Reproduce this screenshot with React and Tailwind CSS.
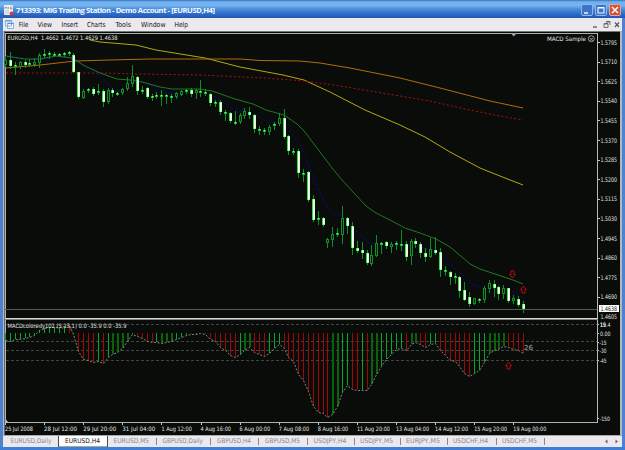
import React from "react";

// [high, bodyTop, bodyBottom, low, filled]
const CANDLES = [
  [56,60,65,66,0],[52,60,66,68,1],[62,65,67,74,0],[61,62,67,68,0],[60,62,65,67,1],[59,63,65,66,1],[58,62,65,66,0],[53,55,63,67,0],[49,54,55,57,1],[51,53,55,58,1],
  [52,54,55,56,1],[53,54,55,56,1],[52,53,55,56,1],[51,52,54,55,1],[53,55,72,72,1],[72,72,97,98,1],[89,91,98,98,0],[88,89,91,92,1],[87,89,94,95,1],[84,91,93,94,1],
  [89,91,102,106,1],[88,90,102,103,0],[88,90,93,96,1],[92,93,94,95,1],[88,89,93,94,0],[77,83,89,90,0],[65,76,84,86,0],[76,77,91,94,1],[86,90,92,93,1],[87,88,97,98,1],
  [94,96,97,100,1],[92,95,96,98,1],[90,95,96,105,1],[94,95,97,103,1],[94,96,97,102,1],[92,93,97,98,0],[90,91,95,95,0],[89,90,92,93,1],[88,90,94,96,1],[89,90,93,98,0],
  [80,91,92,96,1],[89,92,94,95,1],[93,94,103,105,1],[100,102,103,106,1],[100,102,112,114,1],[110,112,114,120,1],[112,113,121,122,1],[111,122,123,124,1],[113,115,122,123,0],[108,111,116,118,0],
  [107,112,115,118,1],[114,115,129,132,1],[126,129,130,134,1],[128,130,131,134,1],[125,127,132,134,0],[122,124,126,129,0],[113,118,124,125,0],[109,118,137,138,1],[135,136,151,154,1],[148,151,152,154,1],
  [149,151,173,177,1],[169,173,174,181,1],[171,172,200,201,1],[195,199,220,221,1],[211,218,219,224,1],[217,218,225,226,1],[238,239,243,247,0],[227,234,240,246,0],[228,233,235,236,1],[206,218,235,243,0],
  [217,218,226,233,1],[222,226,248,254,1],[241,248,251,252,1],[242,250,253,258,1],[250,253,263,264,1],[245,255,264,265,0],[235,243,256,256,0],[242,243,245,253,0],[241,242,246,248,1],[242,244,247,252,0],
  [241,243,244,249,1],[230,244,245,250,1],[241,244,257,260,1],[239,241,256,264,0],[238,241,244,247,1],[242,244,253,257,1],[248,253,257,261,1],[238,249,257,257,0],[237,250,253,254,1],[248,252,270,276,1],
  [266,270,272,275,1],[271,272,277,284,1],[273,276,278,283,1],[276,277,291,297,1],[282,290,300,300,1],[292,297,304,306,1],[298,298,304,304,0],[298,299,301,302,0],[286,288,300,302,0],[280,283,289,292,0],
  [280,284,288,296,1],[286,287,294,299,1],[285,288,294,298,0],[288,288,301,302,1],[295,298,301,303,0],[296,299,305,306,1],[301,304,309,312,1],
];

// MACD values as y positions; colours: g bright green, d dark green, r red
const MACD = [340,341,339,339,338,337,335,330,328,327,327,327,326,325,334,351,359,360,362,361,363,357,354,352,348,341,334,336,338,341,342,342,343,342,341,339,337,335,334,334,333,334,339,341,347,350,355,357,354,350,347,352,354,356,353,348,344,348,357,361,374,380,391,406,412,413,417,414,406,392,385,389,390,390,390,384,374,366,359,354,349,348,350,344,342,344,347,344,343,350,355,360,361,366,373,376,373,370,362,353,350,349,346,347,349,350,353];
const COLORS = "gggggggggggggrrrrrrgrgddddgrrrrgdddgggrgrrrrrrrrgddrrrgggrrrrrrrrrrddggrrgrddgggggrddrrggrrrrrrrgggddddrrrr";
const FILL = { g: "#00a832", d: "#0b620b", r: "#a30606" };
const cx = (i) => 5 + Math.round(i * 4.886);

const PRICES = ["1.5795","1.5710","1.5625","1.5540","1.5455","1.5370","1.5285","1.5200","1.5115","1.5030","1.4945","1.4860","1.4775","1.4690"];
const DATES = ["25 Jul 2008","28 Jul 12:00","29 Jul 20:00","31 Jul 04:00","1 Aug 12:00","4 Aug 16:00","6 Aug 00:00","7 Aug 08:00","8 Aug 16:00","11 Aug 20:00","13 Aug 04:00","14 Aug 12:00","15 Aug 20:00","19 Aug 00:00"];
const LEVELS = [["15",326.5],["19.4",326.5],["0.00",335.5],["-15",344.5],["-30",353],["-45",362.5],["-150",421]];
const TABS = ["EURUSD,Daily","EURUSD,H4","EURUSD,M5","GBPUSD,Daily","GBPUSD,H4","GBPUSD,M5","USDJPY,H4","USDJPY,M5","EURJPY,M5","USDCHF,H4","USDCHF,M5"];
const MENU = ["File","View","Insert","Charts","Tools","Window","Help"];
const FONT = "[font-family:'DejaVu_Sans',sans-serif]";

function T({ x, y, w, children, size = 6, fill = "#e2e5e2" }) {
  return (
    <text x={x} y={y} fontSize={size} fill={fill} textLength={w} lengthAdjust="spacingAndGlyphs">{children}</text>
  );
}

function Arrow({ x, y, down }) {
  return (
    <path
      transform={`translate(${x} ${y}) scale(1 ${down ? -1 : 1})`}
      d="M0 -3.5 L3 0 H1.5 V3.5 H-1.5 V0 H-3 Z"
      fill="none" stroke="#b90808" strokeWidth="1"
    />
  );
}

function Chart() {
  return (
    <svg viewBox="4 31 616 404" className={`block h-[404px] w-[616px] shrink-0 overflow-visible ${FONT}`}>
      <rect x="4" y="31" width="616" height="404" fill="#0a0c09" />
      <g shapeRendering="crispEdges">
        <rect x="4" y="31" width="616" height="1" fill="#77777a" />
        <rect x="4" y="31" width="1" height="404" fill="#65686a" />
        <rect x="5" y="33" width="593" height="1" fill="#aab0aa" />
        <rect x="5" y="33" width="1" height="390" fill="#aab0aa" />
        <rect x="597" y="33" width="1" height="390" fill="#b5bab5" />
        <rect x="5" y="309" width="592" height="1" fill="#555a55" />
        <rect x="5" y="318" width="593" height="1" fill="#d4d6d4" />
        <rect x="5" y="319" width="593" height="1" fill="#80827f" />
        <rect x="5" y="422" width="593" height="1" fill="#b0b4b0" />
        {[324, 341, 350, 360].map((y) => (
          <path key={y} d={`M6 ${y}.5 H597`} stroke="#414541" strokeDasharray="3 2" />
        ))}
        {MACD.map((y, i) => (
          <rect key={i} x={cx(i)} y={Math.min(y, 333)} width={COLORS[i] === "d" ? 2 : 1} height={Math.abs(y - 333)} fill={FILL[COLORS[i]]} />
        ))}
        {PRICES.map((p, i) => <rect key={p} x="598" y={42 + Math.round(i * 19.6)} width="2" height="1" fill="#c5c8c5" />)}
        {DATES.map((p, i) => <rect key={p} x={5 + Math.round(i * 39.1)} y="423" width="1" height="2" fill="#c5c8c5" />)}
        {LEVELS.map(([p, y]) => <rect key={p} x="598" y={Math.round(y - 3)} width="1" height="1" fill="#c5c8c5" />)}
      </g>
      <polyline points={MACD.map((y, i) => `${cx(i) + 0.5},${y + 0.5}`).join(" ")} fill="none" stroke="#8e918e" strokeWidth="0.9" strokeDasharray="2 1.6" />

      <g fill="none" strokeWidth="1">
        <path d="M90 40 L100 42 L136 45 L156 50 L205 58 L240 67 L283 75 L304 80 L330 92 L365 110 L400 125 L425 137 L450 152 L480 168 L505 178 L523 185" stroke="#b3a90a" />
        <path d="M6 68 L40 65 L75 61 L110 60 L150 59 L240 59 L260 60.5 L300 61 L320 63 L350 68 L400 78 L440 88 L490 101 L523 108" stroke="#b06d0b" />
        <path d="M6 73 L100 73 L140 74 L200 75 L265 78 L305 81 L340 86 L400 96 L430 101 L465 109 L500 116 L523 120" stroke="#b00c10" strokeDasharray="2 2.3" />
        <path d="M6 57 L25 59 L40 60 L56 57 L73 57 L85 68 L100 76 L115 92 L122 91 L132 80 L148 83 L158 91 L170 93 L200 92 L214 96 L230 107 L245 112 L256 115 L268 122 L282 123 L291 132 L303 150 L316 184 L326 206 L335 214 L343 216 L353 227 L368 242 L380 245 L405 245 L422 247 L432 250 L446 260 L458 271 L470 283 L483 288 L505 289 L516 293 L523 298" stroke="#08088c" strokeDasharray="3 2" />
        <path d="M6 56 L25 59 L40 59 L56 56 L72 58 L85 66 L100 73 L117 79 L130 80 L142 82 L160 87 L172 89 L200 89 L212 91 L235 99 L253 104 L266 110 L284 115 L297 124 L305 132 L317 148 L332 168 L342 180 L354 193 L366 206 L376 213 L390 220 L405 228 L420 233 L436 239 L450 247 L462 257 L470 264 L480 269 L495 274 L513 280 L523 284" stroke="#1f7826" />
      </g>

      <g shapeRendering="crispEdges">
        {CANDLES.map(([h, t, b, l, filled], i) => {
          const x = cx(i);
          const height = Math.max(2, b - t);
          return (
            <g key={i}>
              <rect x={x} y={h} width="1" height={l - h + 1} fill="#0c8c2c" />
              {height <= 2 ? (
                <>
                  <rect x={x - 1} y={t} width="3" height="2" fill="#13bd25" />
                  <rect x={x} y={t} width="1" height="1" fill="#8dff8d" />
                </>
              ) : (
                <>
                  <rect x={x - 1} y={t} width="3" height={height} fill={filled ? "#9cfba0" : "#118f25"} />
                  {filled ? (
                    <>
                      <rect x={x - 1} y={t} width="1" height={height} fill="#2fe236" />
                      <rect x={x} y={t + 1} width="1" height={height - 2} fill="#ffffff" />
                      <rect x={x + 1} y={t + 1} width="1" height={height - 2} fill="#d3ffd0" />
                    </>
                  ) : <rect x={x} y={t + 1} width="1" height={height - 2} fill="#061d08" />}
                </>
              )}
            </g>
          );
        })}
      </g>

      <Arrow x={512.5} y={274.5} down />
      <Arrow x={523.5} y={289.5} />
      <Arrow x={508.5} y={365.5} />
      <path d="M510.5 33 H517 L513.7 36.5 Z" fill="#94a4b7" />
      <path d="M5.5 419 V423 H9 Z" fill="#a9b9d4" />

      <T x={7.5} y={40.3} w={110}>EURUSD,H4&nbsp; 1.4662 1.4672 1.4629 1.4638</T>
      <T x={547} y={40.7} w={39}>MACD Sample</T>
      <g fill="none" stroke="#c9ccc9" strokeWidth="0.7">
        <circle cx="591.3" cy="38.7" r="3" />
        <path d="M589.6 38 L591.3 39 L593 38 M589.8 40.5 Q591.3 39 592.8 40.5" />
      </g>
      <T x={7.5} y={328.3} w={119}>MACDcoloredy102 (5,13,1) 0.0 -35.9 0.0 -35.9</T>
      <T x={524} y={350} w={9} size={7} fill="#a4a7a4">26</T>

      {PRICES.map((p, i) => <T key={p} x={600.5} y={44.5 + i * 19.6} w={16.5} size={6.3}>{p}</T>)}
      <T x={600.5} y={319} w={16.5} size={6.3}>1.4605</T>
      <rect x="599" y="305" width="20" height="7" fill="#fff" />
      <T x={600.5} y={311} w={16.5} size={6.3} fill="#15171a">1.4638</T>
      {LEVELS.map(([p, y]) => <T key={p} x={p[0] === "-" ? 599.5 : 600} y={y} w={p.length === 2 ? 6 : p.length === 3 ? 7 : 10.5}>{p}</T>)}
      {DATES.map((d, i) => <T key={d} x={5 + i * 39.1} y={430.7} w={d.length === 12 ? 33 : i === 0 ? 28 : 30.5}>{d}</T>)}
    </svg>
  );
}

function TitleButton({ close, children }) {
  return (
    <div className={`h-[12px] w-[12px] rounded-[2px] border ${close ? "border-[#e0a79d] bg-[#d4523a]" : "border-[#8fb5ea] bg-[#3c74ca]"}`}>
      <svg viewBox="0 0 10 10" className="block h-full w-full" fill="none" stroke="#f6f8fb">{children}</svg>
    </div>
  );
}

export default function App() {
  return (
    <div className={`flex h-[450px] w-[625px] flex-col overflow-hidden bg-[#4d82d0] ${FONT}`}>
      <div className="flex h-[18px] shrink-0 items-center bg-[linear-gradient(180deg,#356fc0_0%,#72b0ee_10%,#76b4ee_30%,#4a8fdd_50%,#2f6fc8_75%,#2454b4_100%)] pl-[4px] pr-[4px] pt-[2px]">
        <svg viewBox="0 0 10 11" className="h-[11px] w-[10px]">
          <rect y="0" width="9" height="10" rx="1" fill="#eeeef0" />
          <path d="M1 4 V2 L2 3 L3 2 V4 M4.5 2 V4 M8 2 H6.5 V4 H8 V3" stroke="#777b88" strokeWidth="0.6" fill="none" />
          <path d="M1 6 H5 M1 8 H5" stroke="#b8bac2" strokeWidth="0.8" />
          <circle cx="7.6" cy="8.4" r="2" fill="#d13a36" />
        </svg>
        <svg className="ml-[2px] h-[14px] w-[210px] overflow-visible [font-family:'Open_Sans',sans-serif]">
          <text x="0" y="10" fontSize="7.6" fontWeight="bold" fill="#f5f8ff" textLength="199" lengthAdjust="spacing">713393: MIG Trading Station - Demo Account - [EURUSD,H4]</text>
        </svg>
        <div className="ml-auto flex gap-[2px]">
          <TitleButton><path d="M2 8 H6" strokeWidth="1.5" /></TitleButton>
          <TitleButton><path d="M2 2.5 H8 V8 H2 Z M2 3 H8" strokeWidth="1.1" /></TitleButton>
          <TitleButton close><path d="M2 2 L8 8 M8 2 L2 8" strokeWidth="1.6" /></TitleButton>
        </div>
      </div>
      <div className="mx-[3px] flex h-[13px] shrink-0 items-center bg-[#ebe9ed] pl-[2px] pr-[2px]">
        <svg viewBox="0 0 9 9" className="h-[9px] w-[9px]">
          <path d="M0.5 0.5 H6.5 V6 H0.5 Z M2.5 3 H8.5 V8.5 H2.5 Z" fill="#eef5ff" stroke="#73a5dc" strokeWidth="0.8" />
          <path d="M0.5 1 H6.5 M2.5 3.5 H8.5" stroke="#5991d2" />
        </svg>
        <svg viewBox="14 18 190 13" className="h-[13px] w-[190px]">
          {MENU.map((m, i) => <text key={m} x={[18.7, 37.5, 61.5, 87, 115.5, 141, 174.5][i]} y="27" fontSize="7" fill="#101014" textLength={[9.7, 14.5, 16.5, 18.5, 15.5, 24.5, 13.5][i]} lengthAdjust="spacingAndGlyphs">{m}</text>)}
        </svg>
        <svg viewBox="0 0 32 10" className="ml-auto h-[10px] w-[32px]" fill="none" stroke="#55575d">
          <path d="M5 7 H9" strokeWidth="1.3" />
          <path d="M18 1.5 H22 V5 M16 3.5 H20 V7.5 H16 Z M16 4 H20 M18 2 H22" strokeWidth="0.8" />
          <path d="M27 2.5 L31 7 M31 2.5 L27 7" strokeWidth="1.2" />
        </svg>
      </div>
      <div className="mx-[3px] flex h-[404px] shrink-0 bg-[#b6b8be] pl-[1px]"><Chart /></div>
      <div className="mx-[3px] flex h-[12px] shrink-0 border-t border-[#aaa9ae] bg-[#ebe9ed]">
        <svg viewBox="3 435 618 12" className="h-[12px] w-[618px]">
          <path d="M58.5 434 H107.5 V446 H58.5 Z" fill="#fff" stroke="#4b4b50" />
          {TABS.map((t, i) => {
            const x = [10.5, 65, 113.5, 162.5, 217, 265, 313.5, 360, 406, 453, 502][i];
            const w = [41, 35, 35.5, 40.5, 34, 35, 33, 33, 34, 35, 35][i];
            return <T key={t} x={x} y={442.3} w={w} size={6.5} fill={i === 1 ? "#111114" : "#88888f"}>{t}</T>;
          })}
          <path d="M156.5 437 V444 M210.5 437 V444 M258.5 437 V444 M307.5 437 V444 M354.5 437 V444 M400.5 437 V444 M447.5 437 V444 M496.5 437 V444 M544.5 437 V444" stroke="#88888e" />
          <path d="M607.5 438.5 L605 440.5 L607.5 442.5 Z M615.5 438.5 L618 440.5 L615.5 442.5 Z" fill="#66676e" />
        </svg>
      </div>
      <div className="min-h-0 flex-1 bg-[#3f7ed6]" />
    </div>
  );
}
